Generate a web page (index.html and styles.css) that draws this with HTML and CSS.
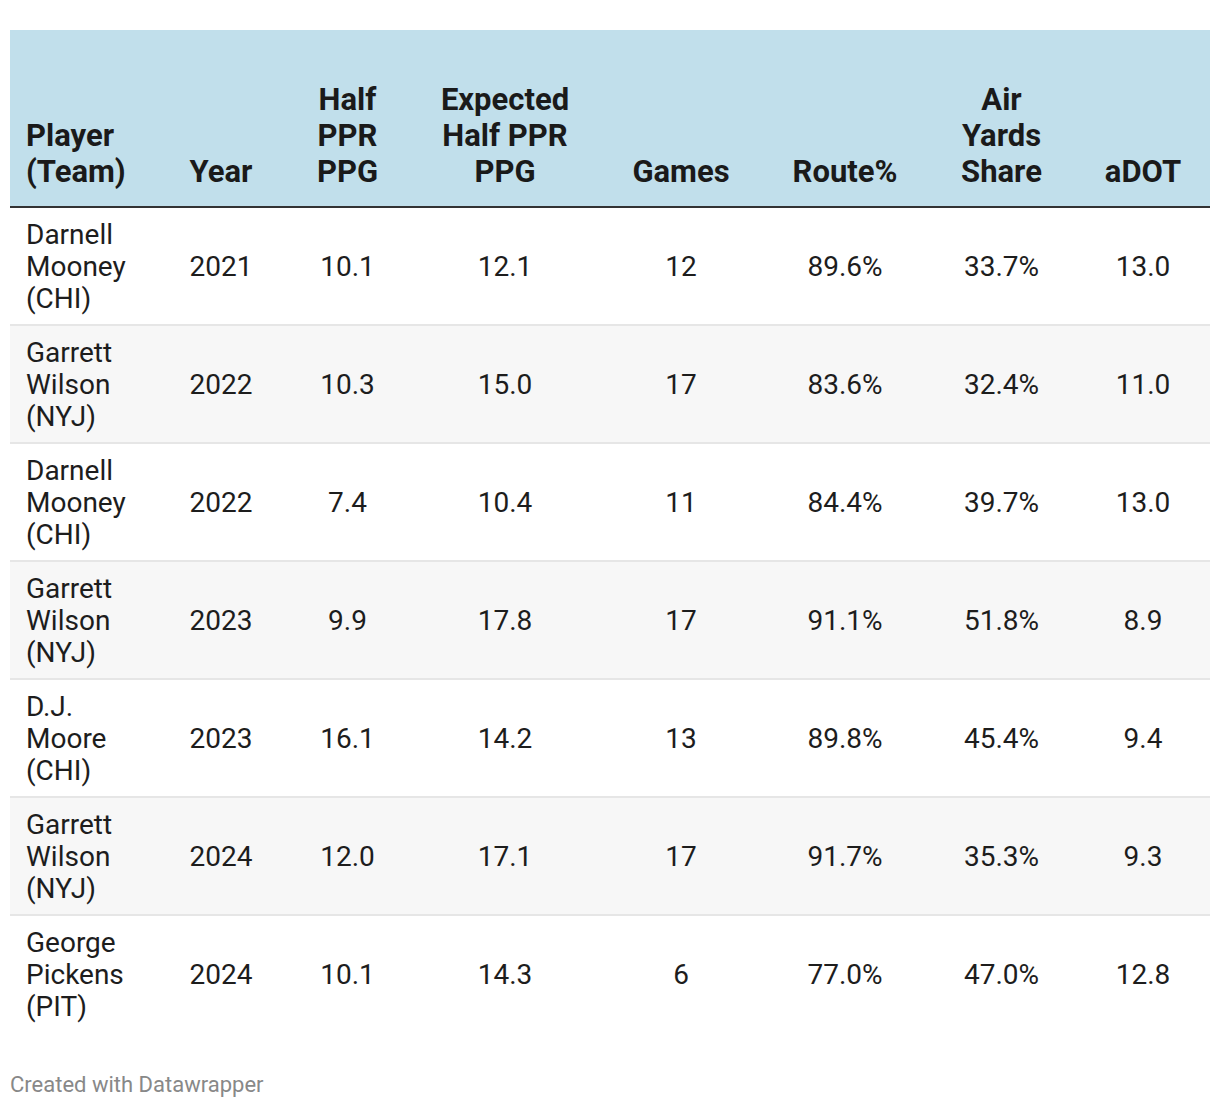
FILE: index.html
```html
<!DOCTYPE html>
<html>
<head>
<meta charset="utf-8">
<link rel="stylesheet" href="styles.css">
</head>
<body>
<div class="chart">
  <table class="dw-table">
    <colgroup>
      <col class="c-player"><col class="c-year"><col class="c-half"><col class="c-exp"><col class="c-games"><col class="c-route"><col class="c-air"><col class="c-adot">
    </colgroup>
    <thead>
      <tr>
        <th class="left">Player<br>(Team)</th>
        <th>Year</th>
        <th>Half<br>PPR<br>PPG</th>
        <th>Expected<br>Half PPR<br>PPG</th>
        <th>Games</th>
        <th>Route%</th>
        <th>Air<br>Yards<br>Share</th>
        <th class="last">aDOT</th>
      </tr>
    </thead>
    <tbody>
      <tr><td class="left">Darnell<br>Mooney<br>(CHI)</td><td>2021</td><td>10.1</td><td>12.1</td><td>12</td><td>89.6%</td><td>33.7%</td><td class="last">13.0</td></tr>
      <tr><td class="left">Garrett<br>Wilson<br>(NYJ)</td><td>2022</td><td>10.3</td><td>15.0</td><td>17</td><td>83.6%</td><td>32.4%</td><td class="last">11.0</td></tr>
      <tr><td class="left">Darnell<br>Mooney<br>(CHI)</td><td>2022</td><td>7.4</td><td>10.4</td><td>11</td><td>84.4%</td><td>39.7%</td><td class="last">13.0</td></tr>
      <tr><td class="left">Garrett<br>Wilson<br>(NYJ)</td><td>2023</td><td>9.9</td><td>17.8</td><td>17</td><td>91.1%</td><td>51.8%</td><td class="last">8.9</td></tr>
      <tr><td class="left">D.J.<br>Moore<br>(CHI)</td><td>2023</td><td>16.1</td><td>14.2</td><td>13</td><td>89.8%</td><td>45.4%</td><td class="last">9.4</td></tr>
      <tr><td class="left">Garrett<br>Wilson<br>(NYJ)</td><td>2024</td><td>12.0</td><td>17.1</td><td>17</td><td>91.7%</td><td>35.3%</td><td class="last">9.3</td></tr>
      <tr><td class="left">George<br>Pickens<br>(PIT)</td><td>2024</td><td>10.1</td><td>14.3</td><td>6</td><td>77.0%</td><td>47.0%</td><td class="last">12.8</td></tr>
    </tbody>
  </table>
  <div class="footer">Created with Datawrapper</div>
</div>
</body>
</html>
```

FILE: styles.css
```css
html, body {
  margin: 0;
  padding: 0;
  background: #ffffff;
}
body {
  font-family: Roboto, "Liberation Sans", Arial, sans-serif;
  color: #1d1d1d;
}
.chart {
  padding: 30px 10px 0 10px;
}
.dw-table {
  width: 1200px;
  border-collapse: collapse;
  table-layout: fixed;
}
.c-player { width: 162px; }
.c-year { width: 98px; }
.c-half { width: 155px; }
.c-exp { width: 160px; }
.c-games { width: 192px; }
.c-route { width: 136px; }
.c-air { width: 177px; }
.c-adot { width: 120px; }

.dw-table thead tr {
  background: #c1dfeb;
}
.dw-table th {
  font-size: 31px;
  line-height: 36px;
  font-weight: 700;
  color: #1a1a1a;
  text-align: center;
  vertical-align: bottom;
  padding: 52px 0 16px 0;
  border-bottom: 2px solid #333333;
}
.dw-table td {
  font-size: 28px;
  line-height: 32px;
  text-align: center;
  vertical-align: middle;
  padding: 11px 0 9px 0;
  border-bottom: 2px solid #e6e6e6;
  color: #1d1d1d;
}
.dw-table tbody tr:nth-child(even) {
  background: #f7f7f7;
}
.dw-table tbody tr:last-child td {
  border-bottom: 0;
}
.dw-table .left {
  text-align: left;
  padding-left: 16px;
}
.dw-table .last {
  padding-right: 14px;
}
.footer {
  margin-top: 41px;
  font-size: 22px;
  line-height: 24px;
  color: #888888;
}
```
